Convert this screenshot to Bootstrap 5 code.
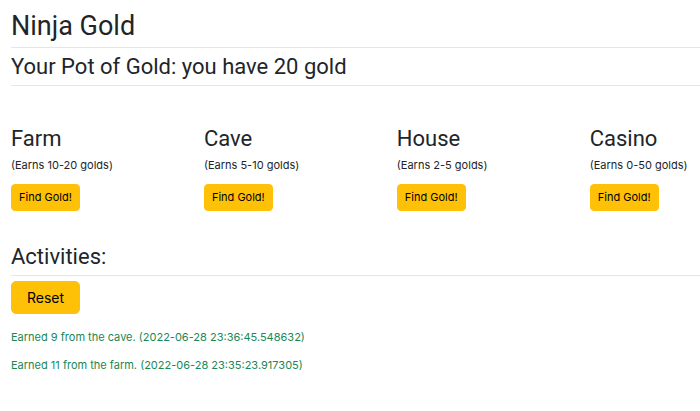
<!DOCTYPE html>
<html lang="en">
<head>
<meta charset="utf-8">
<meta name="viewport" content="width=device-width, initial-scale=1">
<title>Ninja Gold</title>
<link href="https://cdn.jsdelivr.net/npm/bootstrap@5.3.0/dist/css/bootstrap.min.css" rel="stylesheet">
<style>
  body { font-family: Inter, sans-serif; font-size: 11px; line-height: 17px; color: #212529; }
  .page { padding: 10px 0 0 11px; }
  h1, h2 { font-family: Roboto, sans-serif; font-weight: 450; margin: 0; }
  h1 { font-size: 27px; line-height: 33px; }
  h2 { font-size: 22px; line-height: 26px; }
  .ruled { border-bottom: 1px solid #e4e6e8; padding-bottom: 5px; }
  h1.ruled { padding-bottom: 4px; }
  .pot { padding-top: 6px; }
  .places { display: grid; grid-template-columns: 28% 28% 28% 1fr; margin-top: 40px; }
  .places p { margin: 5px 0 10px; white-space: nowrap; }
  .btn-warning { --bs-btn-bg: #ffc107; color: #000; }
  .find { --bs-btn-padding-x: 7px; --bs-btn-padding-y: 4px; --bs-btn-font-size: 11px; --bs-btn-border-radius: 4px; line-height: 17px; }
  .reset { --bs-btn-padding-x: 15px; --bs-btn-padding-y: 6px; --bs-btn-font-size: 14px; --bs-btn-border-radius: 5px; line-height: 19px; margin-top: 5px; }
  .activities { margin-top: 33px; }
  .log { margin-top: 15px; }
  .log p { margin: 0 0 11px; }
</style>
</head>
<body>
<main class="page container-fluid">
  <h1 class="ruled">Ninja Gold</h1>
  <h2 class="ruled pot">Your Pot of Gold: you have 20 gold</h2>

  <section class="places">
    <form>
      <h2>Farm</h2>
      <p>(Earns 10-20 golds)</p>
      <button type="button" class="btn btn-warning find">Find Gold!</button>
    </form>
    <form>
      <h2>Cave</h2>
      <p>(Earns 5-10 golds)</p>
      <button type="button" class="btn btn-warning find">Find Gold!</button>
    </form>
    <form>
      <h2>House</h2>
      <p>(Earns 2-5 golds)</p>
      <button type="button" class="btn btn-warning find">Find Gold!</button>
    </form>
    <form>
      <h2>Casino</h2>
      <p>(Earns 0-50 golds)</p>
      <button type="button" class="btn btn-warning find">Find Gold!</button>
    </form>
  </section>

  <section class="activities">
    <h2 class="ruled">Activities:</h2>
    <button type="button" class="btn btn-warning reset">Reset</button>
    <div class="log text-success">
      <p>Earned 9 from the cave. (2022-06-28 23:36:45.548632)</p>
      <p>Earned 11 from the farm. (2022-06-28 23:35:23.917305)</p>
    </div>
  </section>
</main>
<script src="https://cdn.jsdelivr.net/npm/bootstrap@5.3.0/dist/js/bootstrap.bundle.min.js"></script>
</body>
</html>
